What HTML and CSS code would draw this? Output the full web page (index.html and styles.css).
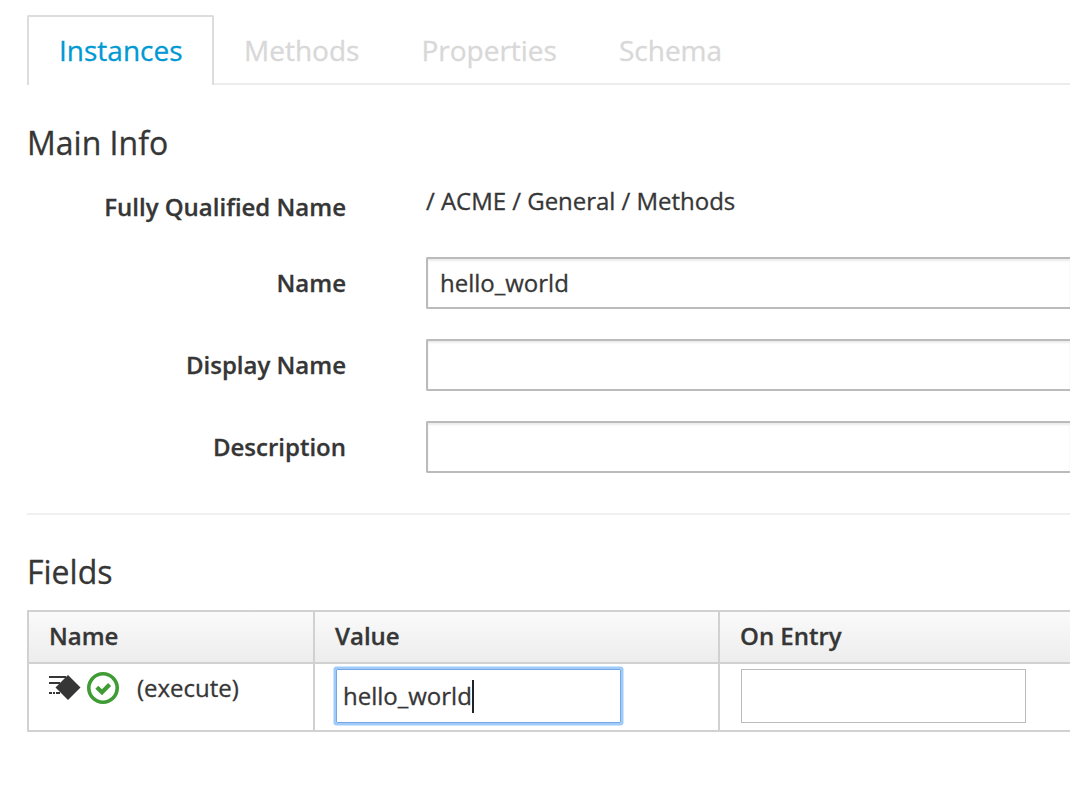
FILE: index.html
```html
<!DOCTYPE html>
<html lang="en">
<head>
<meta charset="utf-8">
<title>Instances</title>
<link rel="stylesheet" href="styles.css">
</head>
<body>
<main class="page">
  <nav class="tabs">
    <a class="tab tab-active">Instances</a>
    <a class="tab tab-methods">Methods</a>
    <a class="tab tab-properties">Properties</a>
    <a class="tab tab-schema">Schema</a>
  </nav>

  <h3 class="heading">Main Info</h3>
  <section class="form">
    <div class="row row-static">
      <label class="label">Fully Qualified Name</label>
      <div class="static">/ ACME / General / Methods</div>
    </div>
    <div class="row">
      <label class="label">Name</label>
      <div class="control">hello_world</div>
    </div>
    <div class="row">
      <label class="label">Display Name</label>
      <div class="control"></div>
    </div>
    <div class="row">
      <label class="label">Description</label>
      <div class="control"></div>
    </div>
  </section>
  <hr class="rule">

  <h3 class="heading heading-fields">Fields</h3>
  <section class="grid">
    <div class="th">Name</div>
    <div class="th">Value</div>
    <div class="th">On Entry</div>
    <div class="td td-name">
      <svg class="icon-method" width="32" height="26" viewBox="0 0 32 26">
        <g fill="#363636">
          <path d="M0 1h17v2H0zM0 7h11v2H0zM0 17h3v2H0zM4 17h2v2H4zM7 17h4v2H7z"/>
          <path d="M19 0L31.500 12.500L19 25L6.500 12.500z"/>
        </g>
      </svg>
      <svg class="icon-ok" width="32" height="32" viewBox="0 0 32 32" fill="none" stroke="#3f9c35">
        <circle cx="16" cy="16" r="14.200" stroke-width="3.600"/>
        <path d="M9.800 15.200L15 20.200L22.600 12.600" stroke-width="4.200"/>
      </svg>
      <span>(execute)</span>
    </div>
    <div class="td"><div class="field field-focus">hello_world<i class="caret"></i></div></div>
    <div class="td"><div class="field"></div></div>
  </section>
</main>
</body>
</html>
```
FILE: styles.css
```css
* { box-sizing: border-box; }
body {
  margin: 0;
  background: #fff;
  color: #363636;
  font: 24px/40px "Open Sans", sans-serif;
  -webkit-text-stroke: .3px;
  overflow: hidden;
}
.page {
  height: 804px;
  padding: 15px 0 0 27px;
}
.tabs {
  display: flex;
  height: 70px;
  background: linear-gradient(#ececec, #ececec) 0 100% / 100% 2px no-repeat;
}
.tab {
  height: 70px;
  padding: 0 31px 0 31px;
  font-size: 28px;
  line-height: 70px;
  color: #d8d8d8;
}
.tab-active {
  width: 187px;
  padding: 0 0 0 30px;
  line-height: 66px;
  color: #0099d3;
  background: #fff;
  border: 2px solid #ddd;
  border-bottom: 0;
  border-radius: 2px 2px 0 0;
}
.tab-methods { padding-left: 30px; }
.heading {
  margin: 38px 0 0;
  font-size: 32px;
  font-weight: 400;
  line-height: 40px;
}
.heading-fields { margin-top: 37px; }
.form { padding-top: 24px; }
.row {
  display: grid;
  grid-template-columns: 319px 1fr;
  column-gap: 80px;
  align-items: center;
  height: 52px;
  margin-bottom: 30px;
}
.row-static {
  height: 40px;
  align-items: start;
}
.label {
  font-weight: 600;
  text-align: right;
}
.static {
  margin-top: -6px;
  letter-spacing: -.03px;
}
.control {
  height: 52px;
  padding-left: 12px;
  line-height: 48px;
  border: 2px solid #bbb;
  border-right: 0;
  border-radius: 2px 0 0 2px;
  box-shadow: inset 0 2px 2px rgba(3, 3, 3, .075);
}
.rule {
  height: 2px;
  margin: 40px 0 0;
  border: 0;
  background: #f0f0f0;
}
.grid {
  display: grid;
  grid-template-columns: 286px 405px 1fr;
  grid-template-rows: 52px 70px;
  margin-top: 18px;
}
.th, .td {
  border: 2px solid #d1d1d1;
  border-width: 2px 0 0 2px;
}
.th {
  padding-left: 20px;
  font-weight: 600;
  line-height: 48px;
  background: linear-gradient(#fafafa, #ededed) padding-box;
}
.td {
  padding: 5px 0 0 20px;
  border-bottom-width: 2px;
}
.td-name {
  display: flex;
  align-items: flex-start;
}
.td-name span {
  margin-left: 18px;
  line-height: 38px;
}
.icon-method { margin-top: 6px; }
.icon-ok { margin: 3px 0 0 6px; }
.field {
  display: flex;
  align-items: center;
  width: 285px;
  height: 54px;
  margin-left: 1px;
  padding-left: 6px;
  border: 1px solid #bbb;
}
.field-focus {
  border-color: #76a7e0;
  border-radius: 1px;
  box-shadow: 0 0 0 2.500px #9fcbfb;
}
.caret {
  width: 2px;
  height: 33px;
  background: #222;
}
```
